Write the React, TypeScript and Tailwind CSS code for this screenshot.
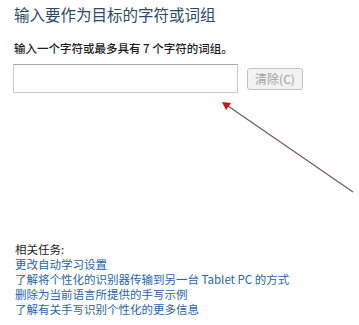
const links = [
  "更改自动学习设置",
  "了解将个性化的识别器传输到另一台 Tablet PC 的方式",
  "删除为当前语言所提供的手写示例",
  "了解有关手写识别个性化的更多信息",
];

export default function App() {
  return (
    <div
      className="relative w-[359px] h-[325px] bg-white overflow-hidden"
      style={{ fontFamily: '"Noto Sans CJK SC", "Noto Sans", sans-serif' }}
    >
      <div className="flex flex-col pl-[14px] pt-[3px]">
        <h1 className="text-[15.5px] leading-[22px] text-[#2b4a6a]">
          输入要作为目标的字符或词组
        </h1>
        <p className="mt-[15px] text-[11.5px] leading-[16px] font-medium text-[#1c1c1c]">
          输入一个字符或最多具有 7 个字符的词组。
        </p>
        <div className="mt-[8px] flex items-center gap-[9px]">
          <input
            className="w-[225px] h-[29px] -ml-[1px] border border-[#c9c9c9] border-t-[#a9a9a9] bg-white outline-none"
            type="text"
          />
          <button className="w-[56px] h-[22px] rounded-[3px] border border-[#c2c2c2] bg-[#f2f2f2] text-[12px] text-[#a0a0a0] leading-none">
            清除(C)
          </button>
        </div>
      </div>

      <div className="absolute left-[15px] top-[242px] flex flex-col text-[11.5px] leading-[15px]">
        <span className="text-[#1c1c1c]">相关任务:</span>
        {links.map((l) => (
          <a key={l} className="text-[#2366b2] cursor-pointer">
            {l}
          </a>
        ))}
      </div>

      <svg className="absolute inset-0" width="359" height="325">
        <line x1="353" y1="192" x2="228" y2="106" stroke="#6e5a5a" strokeWidth="1.2" />
        <polygon points="222,102 231,103 226,110" fill="#d31212" />
      </svg>
    </div>
  );
}
